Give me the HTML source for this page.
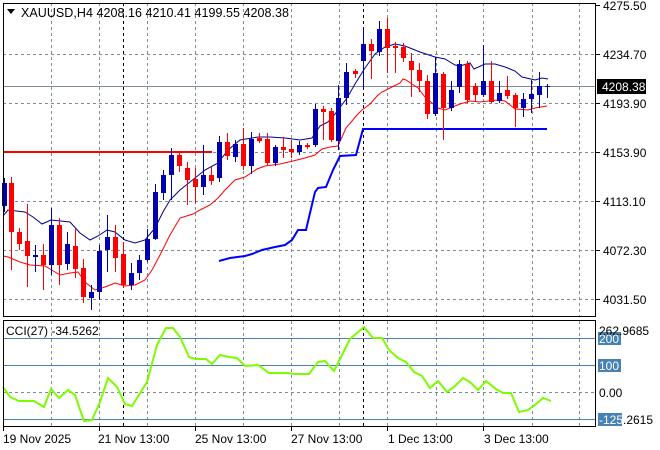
<!DOCTYPE html>
<html><head><meta charset="utf-8"><style>
html,body{margin:0;padding:0;background:#fff;}
svg{display:block;font-family:"Liberation Sans",sans-serif;font-size:12px;}
</style></head><body>
<svg width="660" height="450" viewBox="0 0 660 450" xmlns="http://www.w3.org/2000/svg">
<rect width="660" height="450" fill="#fff"/>
<g stroke="#7f8b98" stroke-width="1" stroke-dasharray="3,3" fill="none">
<path d="M3 54.5H596M3 103.5H596M3 152.5H596M3 201.5H596M3 250.5H596M3 299.5H596"/>
<path d="M51.5 3V317M99.5 3V317M147.5 3V317M195.5 3V317M243.5 3V317M291.5 3V317M339.5 3V317M387.5 3V317M436.5 3V317M483.5 3V317M532.5 3V317M579.5 3V317"/>
<path d="M51.5 321V426M99.5 321V426M147.5 321V426M195.5 321V426M243.5 321V426M291.5 321V426M339.5 321V426M387.5 321V426M436.5 321V426M483.5 321V426M532.5 321V426M579.5 321V426"/>
<path d="M3 392.5H596"/>
</g>
<g stroke="#000" stroke-dasharray="3,3"><path d="M123.5 3V317M363.5 3V317M123.5 321V426M363.5 321V426"/></g>
<path d="M3 86.5H596" stroke="#7f8b98"/>
<path d="M3 152H212" stroke="#ff0000" stroke-width="2"/>
<polyline fill="none" stroke="#0000ff" stroke-width="2" points="219,261 230,258 245,256 252,254 262,250 275,247 285,245 292,240 298,230 306,230 310,213 315,192 318,188 326,187 333,170 340,156 356,155 363,129 547,129"/>
<polyline fill="none" stroke="#00008b" stroke-width="1" points="3,216 8,210 25,212 33,217 42,224 51,220 70,222 80,233 90,240 98,236 107,230 115,232 125,240 135,243 145,240 155,228 163,212 170,200 180,190 195,178 205,170 218,163 228,150 240,140 258,137 270,137 285,138 300,140 312,138 320,126 328,122 335,114 347,98 355,84 365,68 375,54 385,47 395,44 405,46 420,52 435,57 445,59 455,65 460,66 470,63 474,69 485,64 495,64 505,67 515,71 522,77 535,80 542,78 548,79"/>
<polyline fill="none" stroke="#ff0000" stroke-width="1" points="3,256 8,257 20,262 30,265 45,266 55,272 60,275 70,273 78,272 85,282 95,290 105,287 115,283 125,286 135,285 145,280 152,270 160,255 170,235 180,218 193,214 200,210 210,205 218,198 225,190 235,180 245,177 257,169 265,166 280,164 293,161 305,158 315,155 322,149 330,147 338,146 346,128 352,121 357,115 362,110 370,104 378,95 382,92 390,88 400,83 403,79 406,80 412,84 418,88 425,97 438,108 445,110 460,104 470,101 480,102 497,100 505,101 515,109 528,110 535,108 547,106"/>
<g stroke-width="1">
<path stroke="#0000b0" d="M4.5 178V212M35.5 245V272M51.5 208V275M67.5 232V270M91.5 285V310M99.5 245V300M107.5 215V272M131.5 263V290M139.5 255V280M147.5 229V262M155.5 184V240M163.5 170V200M171.5 148V200M203.5 145V195M219.5 136V182M235.5 140V162M251.5 132V174M275.5 145V166M299.5 141V155M315.5 104V147M338.5 85V150M346.5 63V105M363.5 27V90M379.5 21V56M435.5 57V116M451.5 81V111M459.5 60V93M483.5 45V97M499.5 81V103M523.5 93V117M531.5 80V113M539.5 72V108M547.5 84V98"/>
<path stroke="#ff0000" d="M11.5 177V270M19.5 228V250M27.5 204V287M43.5 244V290M59.5 218V285M75.5 229V278M83.5 259V303M115.5 225V272M123.5 242V288M179.5 153V172M187.5 162V205M195.5 168V203M211.5 167V185M227.5 133V160M243.5 128V170M259.5 133V143M267.5 133V165M283.5 137V158M291.5 140V158M307.5 143V149M323.5 106V140M331.5 108V142M355.5 69V78M371.5 39V79M387.5 18V73M395.5 42V73M403.5 43V62M411.5 53V97M419.5 63V92M427.5 75V119M443.5 72V140M467.5 61V103M475.5 83V102M491.5 61V103M507.5 76V99M515.5 93V127"/>
</g>
<g fill="#0000b0">
<rect x="2" y="183" width="5" height="23"/><rect x="33" y="255" width="5" height="2"/><rect x="49" y="225" width="5" height="40"/><rect x="65" y="244" width="5" height="20"/><rect x="89" y="292" width="5" height="6"/><rect x="97" y="251" width="5" height="41"/><rect x="105" y="237" width="5" height="13"/><rect x="129" y="273" width="5" height="12"/><rect x="137" y="260" width="5" height="13"/><rect x="145" y="239" width="5" height="21"/><rect x="153" y="192" width="5" height="47"/><rect x="161" y="175" width="5" height="18"/><rect x="169" y="155" width="5" height="20"/><rect x="201" y="175" width="5" height="12"/><rect x="217" y="142" width="5" height="36"/><rect x="233" y="144" width="5" height="13"/><rect x="249" y="139" width="5" height="27"/><rect x="273" y="147" width="5" height="16"/><rect x="297" y="145" width="5" height="7"/><rect x="313" y="109" width="5" height="36"/><rect x="336" y="98" width="5" height="43"/><rect x="344" y="72" width="5" height="26"/><rect x="361" y="44" width="5" height="17"/><rect x="377" y="29" width="5" height="23"/><rect x="433" y="73" width="5" height="41"/><rect x="449" y="90" width="5" height="18"/><rect x="457" y="64" width="5" height="23"/><rect x="481" y="81" width="5" height="14"/><rect x="497" y="93" width="5" height="8"/><rect x="521" y="99" width="5" height="9"/><rect x="529" y="94" width="5" height="5"/><rect x="537" y="86" width="5" height="9"/><rect x="545" y="86" width="5" height="1"/>
</g>
<g fill="#ff0000">
<rect x="9" y="183" width="5" height="49"/><rect x="17" y="232" width="5" height="12"/><rect x="25" y="241" width="5" height="15"/><rect x="41" y="255" width="5" height="10"/><rect x="57" y="225" width="5" height="40"/><rect x="73" y="246" width="5" height="23"/><rect x="81" y="268" width="5" height="29"/><rect x="113" y="237" width="5" height="21"/><rect x="121" y="254" width="5" height="31"/><rect x="177" y="155" width="5" height="11"/><rect x="185" y="168" width="5" height="12"/><rect x="193" y="179" width="5" height="8"/><rect x="209" y="175" width="5" height="6"/><rect x="225" y="142" width="5" height="14"/><rect x="241" y="144" width="5" height="22"/><rect x="257" y="138" width="5" height="3"/><rect x="265" y="139" width="5" height="24"/><rect x="281" y="147" width="5" height="3"/><rect x="289" y="149" width="5" height="3"/><rect x="305" y="145" width="5" height="2"/><rect x="321" y="109" width="5" height="3"/><rect x="329" y="111" width="5" height="29"/><rect x="353" y="71" width="5" height="3"/><rect x="369" y="44" width="5" height="7"/><rect x="385" y="29" width="5" height="19"/><rect x="393" y="46" width="5" height="2"/><rect x="401" y="47" width="5" height="11"/><rect x="409" y="61" width="5" height="9"/><rect x="417" y="70" width="5" height="11"/><rect x="425" y="81" width="5" height="33"/><rect x="441" y="74" width="5" height="34"/><rect x="465" y="64" width="5" height="36"/><rect x="473" y="86" width="5" height="9"/><rect x="489" y="81" width="5" height="21"/><rect x="505" y="90" width="5" height="6"/><rect x="513" y="95" width="5" height="13"/>
</g>
<path d="M3 338.5H596M3 365.5H596M3 419.5H596" stroke="#4682b4"/>
<polyline fill="none" stroke="#7cfc00" stroke-width="2" points="3,387 10,397 19,401 34,401 44,407 51,389 59,398 68,390 75,395 84,421 92,420 100,402 108,378 117,387 125,404 132,406 147,382 157,345 166,328 173,328 180,337 189,357 195,359 206,359 212,364 220,355 229,357 237,358 245,366 258,365 269,373 288,373 294,374 309,374 318,362 325,361 334,371 350,339 364,327 373,338 382,338 389,350 398,358 406,362 414,372 422,376 430,388 438,381 447,392 454,387 463,378 470,382 478,390 486,381 496,389 503,393 511,393 519,412 528,410 535,405 543,398 551,401"/>
<rect x="3.5" y="3.5" width="592" height="313" fill="none" stroke="#000"/>
<rect x="3.5" y="320.5" width="592" height="106" fill="none" stroke="#000"/>
<path d="M596 5.5H600M596 54.5H600M596 103.5H600M596 152.5H600M596 201.5H600M596 250.5H600M596 299.5H600" stroke="#000"/>
<g fill="#000">
<text x="603" y="10">4275.50</text>
<text x="603" y="59">4234.70</text>
<text x="603" y="108">4193.90</text>
<text x="603" y="157">4153.90</text>
<text x="603" y="206">4113.10</text>
<text x="603" y="255">4072.30</text>
<text x="603" y="304">4031.50</text>
</g>
<rect x="597" y="79" width="49" height="15" fill="#000"/>
<text x="602" y="91" fill="#fff">4208.38</text>
<rect x="598" y="332" width="23" height="13" fill="#4682b4"/>
<rect x="598" y="359" width="23" height="13" fill="#4682b4"/>
<rect x="598" y="413" width="24" height="13" fill="#4682b4"/>
<text x="599" y="335" fill="#000">262.9685</text>
<text x="599" y="343" fill="#fff">200</text>
<text x="599" y="370" fill="#fff">100</text>
<text x="599" y="397" fill="#000">0.00</text>
<text x="599" y="424" fill="#fff">-125</text>
<text x="623" y="424" fill="#000">.2615</text>
<path d="M7 9L15 9L11 14Z" fill="#000"/>
<text x="21" y="17" fill="#000" font-size="12.5" textLength="268">XAUUSD,H4  4208.16 4210.41 4199.55 4208.38</text>
<text x="6" y="335" fill="#000">CCI(27) -34.5262</text>
<path d="M3.5 427V431M99.5 427V431M195.5 427V431M291.5 427V431M387.5 427V431M483.5 427V431" stroke="#000"/>
<g fill="#000">
<text x="3" y="443">19 Nov 2025</text>
<text x="98" y="443">21 Nov 13:00</text>
<text x="195" y="443">25 Nov 13:00</text>
<text x="291" y="443">27 Nov 13:00</text>
<text x="388" y="443">1 Dec 13:00</text>
<text x="484" y="443">3 Dec 13:00</text>
</g>
</svg>
</body></html>
